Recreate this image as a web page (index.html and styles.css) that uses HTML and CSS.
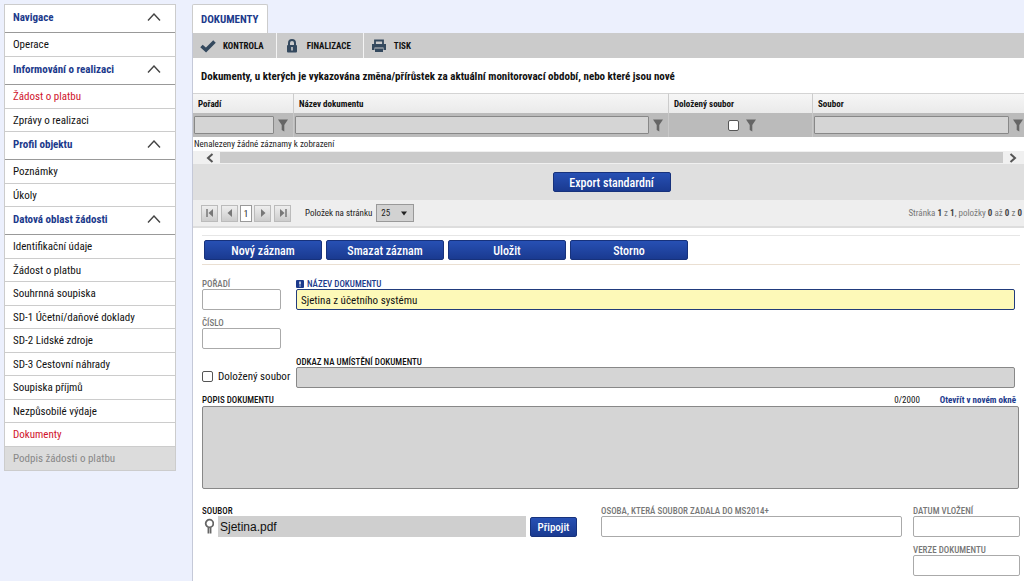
FILE: index.html
```html
<!DOCTYPE html>
<html lang="cs">
<head>
<meta charset="utf-8">
<title>Dokumenty</title>
<link rel="stylesheet" href="styles.css">
</head>
<body>
<svg class="defs" aria-hidden="true">
  <symbol id="chevron" viewBox="0 0 14 8"><path d="M1 7.500 7 1l6 6.500" fill="none" stroke="#444" stroke-width="1.400"/></symbol>
  <symbol id="funnel" viewBox="0 0 10 13"><path d="M0 0.500h10L6.300 6v6.500L3.700 11V6z" fill="#666"/></symbol>
</svg>
<div class="app">
  <nav class="sidebar" aria-label="Navigace">
    <button class="nav-head" type="button">Navigace<svg class="chevron"><use href="#chevron"/></svg></button>
    <ul class="nav-list">
      <li><a href="#">Operace</a></li>
    </ul>
    <button class="nav-head" type="button">Informování o realizaci<svg class="chevron"><use href="#chevron"/></svg></button>
    <ul class="nav-list">
      <li><a class="current" href="#">Žádost o platbu</a></li>
      <li><a href="#">Zprávy o realizaci</a></li>
    </ul>
    <button class="nav-head" type="button">Profil objektu<svg class="chevron"><use href="#chevron"/></svg></button>
    <ul class="nav-list">
      <li><a href="#">Poznámky</a></li>
      <li><a href="#">Úkoly</a></li>
    </ul>
    <button class="nav-head" type="button">Datová oblast žádosti<svg class="chevron"><use href="#chevron"/></svg></button>
    <ul class="nav-list">
      <li><a href="#">Identifikační údaje</a></li>
      <li><a href="#">Žádost o platbu</a></li>
      <li><a href="#">Souhrnná soupiska</a></li>
      <li><a href="#">SD-1 Účetní/daňové doklady</a></li>
      <li><a href="#">SD-2 Lidské zdroje</a></li>
      <li><a href="#">SD-3 Cestovní náhrady</a></li>
      <li><a href="#">Soupiska příjmů</a></li>
      <li><a href="#">Nezpůsobilé výdaje</a></li>
      <li><a class="current" href="#">Dokumenty</a></li>
      <li class="disabled"><a href="#">Podpis žádosti o platbu</a></li>
    </ul>
  </nav>

  <main class="main">
    <h1 class="tab">DOKUMENTY</h1>
    <div class="panel">
      <div class="toolbar">
        <button class="tool" type="button">
          <svg width="16" height="14" viewBox="0 0 16 14"><path d="M1.500 7 6 11 14.500 2.500" fill="none" stroke="#34495e" stroke-width="3.600"/></svg>
          KONTROLA</button>
        <button class="tool" type="button">
          <svg width="16" height="14" viewBox="0 0 16 14"><path d="M5 7V4a3 3 0 0 1 6 0v3" fill="none" stroke="#34495e" stroke-width="2"/><rect x="3" y="6" width="10" height="7.500" rx="1" fill="#34495e"/><path d="M8 8v3.500" stroke="#ccc" stroke-width="1.600"/></svg>
          FINALIZACE</button>
        <button class="tool" type="button">
          <svg width="16" height="14" viewBox="0 0 16 14"><path d="M4 5V1.500h8V5" fill="none" stroke="#34495e" stroke-width="1.800"/><path d="M1 5h14v6h-2.500V8.500h-9V11H1z" fill="#34495e"/><rect x="4" y="9.500" width="8" height="3.500" fill="#34495e"/></svg>
          TISK</button>
      </div>
      <h2 class="title">Dokumenty, u kterých je vykazována změna/přírůstek za aktuální monitorovací období, nebo které jsou nové</h2>

      <table class="grid">
        <colgroup><col class="c-order"><col><col class="c-check"><col class="c-file"></colgroup>
        <thead>
          <tr><th>Pořadí</th><th>Název dokumentu</th><th>Doložený soubor</th><th>Soubor</th></tr>
        </thead>
        <tbody>
          <tr class="filters">
            <td><div class="filter"><input type="text" aria-label="Filtr Pořadí"><svg class="funnel"><use href="#funnel"/></svg></div></td>
            <td><div class="filter"><input type="text" aria-label="Filtr Název dokumentu"><svg class="funnel"><use href="#funnel"/></svg></div></td>
            <td><div class="filter center"><input class="check" type="checkbox" aria-label="Filtr Doložený soubor"><svg class="funnel"><use href="#funnel"/></svg></div></td>
            <td><div class="filter edge"><input type="text" aria-label="Filtr Soubor"><svg class="funnel"><use href="#funnel"/></svg></div></td>
          </tr>
          <tr><td class="empty" colspan="4">Nenalezeny žádné záznamy k zobrazení</td></tr>
        </tbody>
      </table>
      <div class="scrollbar">
        <svg width="8" height="10" viewBox="0 0 8 10"><path d="M6.500 1 2 5l4.500 4" fill="none" stroke="#555" stroke-width="2"/></svg>
        <div class="thumb"></div>
        <svg width="8" height="10" viewBox="0 0 8 10"><path d="M1.500 1 6 5 1.500 9" fill="none" stroke="#555" stroke-width="2"/></svg>
      </div>

      <div class="export"><button class="btn" type="button">Export standardní</button></div>

      <div class="pager">
        <div class="pages">
          <button type="button" aria-label="První"><svg width="8" height="8" viewBox="0 0 8 8"><path d="M1 0v8" stroke="#777" stroke-width="1.500"/><path d="M7 0v8L2.500 4z" fill="#777"/></svg></button>
          <button class="prev" type="button" aria-label="Předchozí"><svg width="8" height="8" viewBox="0 0 8 8"><path d="M6 0v8L1.500 4z" fill="#777"/></svg></button>
          <span class="page">1</span>
          <button type="button" aria-label="Další"><svg width="8" height="8" viewBox="0 0 8 8"><path d="M2 0v8l4.500-4z" fill="#777"/></svg></button>
          <button class="last" type="button" aria-label="Poslední"><svg width="8" height="8" viewBox="0 0 8 8"><path d="M7 0v8" stroke="#777" stroke-width="1.500"/><path d="M1 0v8l4.500-4z" fill="#777"/></svg></button>
        </div>
        <label for="size">Položek na stránku</label>
        <div class="select">
          <select id="size"><option>25</option></select>
          <svg class="arrow" width="6" height="5" viewBox="0 0 6 5"><path d="M0 0.500h6L3 4.500z" fill="#222"/></svg>
        </div>
        <p class="status">Stránka <b>1</b> z <b>1</b>, položky <b>0</b> až <b>0</b> z <b>0</b></p>
      </div>

      <form class="form">
        <div class="actions">
          <button class="btn" type="button">Nový záznam</button>
          <button class="btn" type="button">Smazat záznam</button>
          <button class="btn" type="button">Uložit</button>
          <button class="btn" type="button">Storno</button>
        </div>

        <div class="fields">
          <div class="field muted"><label for="order">POŘADÍ</label><input id="order" type="text"></div>
          <div class="field required">
            <label for="name"><svg width="8" height="8" viewBox="0 0 8 8"><rect width="8" height="8" rx="1" fill="#1c3a8c"/><path d="M4 1.500v3M4 5.500v1" stroke="#fff" stroke-width="1.400"/></svg>NÁZEV DOKUMENTU</label>
            <input id="name" type="text" value="Sjetina z účetního systému">
          </div>
          <div class="field muted first"><label for="number">ČÍSLO</label><input id="number" type="text"></div>
          <div class="attached first"><input class="check" id="attached" type="checkbox"><label for="attached">Doložený soubor</label></div>
          <div class="field readonly"><label for="place">ODKAZ NA UMÍSTĚNÍ DOKUMENTU</label><input id="place" type="text" readonly></div>
        </div>

        <div class="field readonly description">
          <div class="desc-head">
            <label for="desc">POPIS DOKUMENTU</label>
            <span class="count">0/2000</span>
            <a href="#">Otevřít v novém okně</a>
          </div>
          <textarea id="desc" readonly></textarea>
        </div>

        <div class="bottom">
          <div class="field file">
            <label for="file">SOUBOR</label>
            <div class="file-row">
              <svg width="12" height="17" viewBox="0 0 12 17"><circle cx="7.500" cy="5.500" r="3.800" fill="none" stroke="#666" stroke-width="1.800"/><path d="M6.400 9.500v6M8.600 9.500v6" stroke="#666" stroke-width="1.700"/></svg>
              <input id="file" type="text" value="Sjetina.pdf" readonly>
              <button class="btn small" type="button">Připojit</button>
            </div>
          </div>
          <div class="field muted"><label for="person">OSOBA, KTERÁ SOUBOR ZADALA DO MS2014+</label><input id="person" type="text"></div>
          <div class="stack">
            <div class="field muted"><label for="date">DATUM VLOŽENÍ</label><input id="date" type="text"></div>
            <div class="field muted"><label for="version">VERZE DOKUMENTU</label><input id="version" type="text"></div>
          </div>
        </div>
      </form>
    </div>
  </main>
</div>
</body>
</html>
```
FILE: styles.css
```css
* { box-sizing: border-box; }
body {
  margin: 0;
  background: #ecf0fd;
  color: #111;
  font-family: "Roboto Condensed", "Liberation Sans Narrow", Roboto, sans-serif;
  font-size: 11px;
}
button, input, select, textarea { font: inherit; color: inherit; margin: 0; }
h1, h2, p, ul { margin: 0; padding: 0; }
a { text-decoration: none; color: inherit; }
.defs { display: none; }
.app { display: flex; align-items: stretch; gap: 16px; min-height: 100vh; padding: 4px 0 0 4px; }

.sidebar { flex: 0 0 172px; align-self: flex-start; background: #fff; border: 1px solid #ccc; }
.nav-head {
  display: flex; align-items: center; justify-content: space-between;
  width: 100%; height: 28px; padding: 0 14px 3px 8px;
  border: 0; border-bottom: 1px solid #999; background: #fff;
  color: #1c3a8c; font-weight: bold;
}
.chevron { width: 14px; height: 8px; }
.nav-list { list-style: none; }
.nav-list li { height: 24px; padding-left: 8px; border-bottom: 1px solid #ccc; line-height: 24px; white-space: nowrap; }
.nav-list li:nth-child(even) { height: 23px; }
.nav-list .current { color: #d0142c; }
.nav-list .disabled { background: #dcdcdc; color: #888; border-bottom: 0; }

.main { flex: 1; min-width: 0; display: flex; flex-direction: column; }
.tab {
  align-self: flex-start; height: 29px; padding: 0 8px;
  border: 1px solid #ccc; border-bottom: 0; border-radius: 2px 2px 0 0; background: #fff;
  color: #1c3a8c; font-size: 11px; line-height: 30px;
}
.panel { flex: 1; border-left: 1px solid #c5c9d8; background: #fff; }
.toolbar { display: flex; height: 25px; background: #cbcbcb; }
.tool {
  display: flex; align-items: center; gap: 7px; padding: 0 12px 0 7px;
  border: 0; border-right: 1px solid #f4f4f4; background: none;
  font-size: 9px; font-weight: bold;
}
.tool:last-child { border: 0; }
.title { padding: 0 8px; font-size: 11px; line-height: 38px; height: 35px; white-space: nowrap; }

.grid { width: 100%; table-layout: fixed; border-collapse: separate; border-spacing: 0; font-size: 9px; }
.c-order { width: 101px; }
.c-check { width: 144px; }
.c-file { width: 211px; }
.grid th {
  height: 20px; padding: 1px 5px 0; text-align: left;
  border-top: 1px solid #d4d4d4; border-right: 1px solid #ccc;
  background: linear-gradient(#f6f6f6, #eaeaea);
}
.grid td { padding: 0; }
.filters td { height: 24px; background: #bbb; border-right: 1px solid #c8c8c8; }
.grid th:last-child, .filters td:last-child { border-right: 0; }
.filter { display: flex; align-items: center; gap: 4px; padding: 0 5px 0 1px; }
.filter.edge { padding-right: 1px; }
.filter input[type="text"] { flex: 1; min-width: 0; height: 18px; border: 1px solid #888; background: #d5d5d5; border-radius: 1px; }
.filter.center { justify-content: center; gap: 7px; padding-left: 7px; }
.funnel { width: 10px; height: 13px; flex: none; }
.check { appearance: none; width: 11px; height: 11px; border: 1px solid #555; border-radius: 2px; background: #fff; }
.grid .empty { height: 14px; padding-left: 1px; line-height: 14px; color: #222; }
.scrollbar { display: flex; align-items: center; gap: 6px; height: 13px; padding: 0 7px 0 13px; background: #f0f0f0; }
.thumb { flex: 1; height: 11px; background: #cbcbcb; }

.export { display: flex; align-items: center; justify-content: center; height: 36px; padding-left: 6px; background: #dfdfdf; }
.btn {
  width: 118px; height: 20px; padding: 1px 0 0; border: 1px solid #17327c; border-radius: 2px;
  background: linear-gradient(#2750b4, #1a3a90); color: #fff; font-size: 12px; font-weight: 500; line-height: 18px;
}
.pager {
  display: flex; align-items: center; height: 28px; padding: 0 2px 0 8px;
  border-bottom: 2px solid #ddd; background: #eee; font-size: 9px; color: #222; white-space: nowrap;
}
.pages { display: flex; align-items: center; gap: 2px; margin-right: 14px; }
.pages button {
  display: grid; place-items: center; width: 17px; height: 17px; padding: 0;
  border: 1px solid #bbb; background: linear-gradient(#eee, #ccc);
}
.pages .prev, .pages .last { margin-left: 1px; }
.page { width: 12px; height: 17px; border: 1px solid #999; background: #fff; text-align: center; line-height: 16px; }
.select { display: grid; align-items: center; margin-left: 4px; }
.select select { grid-area: 1 / 1; appearance: none; width: 38px; height: 18px; padding: 0 4px; border: 1px solid #999; background: #d2d2d2; }
.arrow { grid-area: 1 / 1; justify-self: end; margin-right: 7px; pointer-events: none; }
.status { margin-left: auto; color: #777; }
.status b { color: #444; }

.form { padding: 7px 4px 0 9px; }
.actions { display: flex; gap: 4px; padding: 4px 2px; margin: 0 0 13px; border-top: 1px solid #e6e6e6; border-bottom: 1px solid #eadfd2; }
.fields { display: grid; grid-template-columns: 79px 1fr; column-gap: 15px; row-gap: 7px; padding-right: 5px; }
.first { grid-column: 1; }
.field { display: flex; flex-direction: column; min-width: 0; }
.field label { display: flex; align-items: center; gap: 3px; height: 11px; padding-top: 1px; font-size: 9px; font-weight: 500; line-height: 11px; white-space: nowrap; }
.field input { width: 100%; height: 21px; padding: 1px 4px 0; border: 1px solid #aaa; border-radius: 2px; background: #fff; }
.field.muted label { color: #777; }
.field.required label { color: #1c3a8c; }
.field.required input { border-color: #223c7c; background: #fdf9b8; }
.field.readonly input, .field textarea { border: 1px solid #888; background: #d5d5d5; }
.attached { display: flex; align-items: center; gap: 5px; padding-top: 8px; white-space: nowrap; }
.attached .check { flex: none; }
.description { margin: 6px 1px 0 0; }
.desc-head { display: flex; align-items: center; gap: 20px; padding-right: 3px; height: 12px; font-size: 9px; }
.desc-head .count { margin-left: auto; }
.desc-head a { color: #1c3a8c; font-weight: bold; }
.field textarea { height: 83px; border-radius: 2px; resize: none; }
.bottom { display: grid; grid-template-columns: 388px 1fr 107px; column-gap: 11px; margin-top: 16px; }
.bottom .file { margin-right: 13px; }
.file-row { display: flex; gap: 4px; align-items: center; }
.field.file input { flex: 1; padding: 0 2px; border: 0; border-radius: 0; background: #cfcfcf; font-family: "Liberation Sans", sans-serif; font-size: 12px; }
.btn.small { width: 47px; font-size: 11px; }
.stack { display: grid; gap: 7px; }
```
